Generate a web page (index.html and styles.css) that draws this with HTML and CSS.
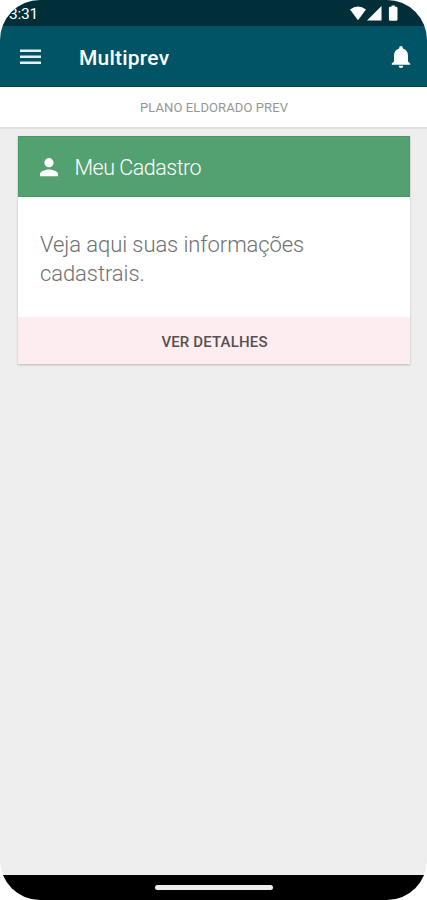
FILE: index.html
```html
<!DOCTYPE html>
<html lang="pt-BR">
<head>
<meta charset="utf-8">
<title>Multiprev</title>
<link rel="stylesheet" href="styles.css">
</head>
<body>
<div class="phone">
  <div class="status">
    <span class="clock">3:31</span>
    <svg class="status-icons" width="52" height="18" viewBox="0 0 52 18" fill="#fff">
      <path d="M1 4.500Q9-1.500 17 4.500L9 15.200Z"/>
      <path d="M32.500 1V15.500H18Z"/>
      <path d="M42.500 .5h3.400v1.300h1.200q1.400 0 1.400 1.400v11q0 1.500-1.500 1.500h-5.600q-1.500 0-1.500-1.500V3.200q0-1.400 1.400-1.400h1.200Z"/>
    </svg>
  </div>
  <header class="appbar">
    <svg class="menu" width="22" height="16" viewBox="0 0 22 16" fill="#e4f1f4"><path d="M0 .5h21v2.500H0zM0 6.500h21V9H0zM0 12.500h21V15H0z"/></svg>
    <h1 class="title">Multiprev</h1>
    <svg class="bell" width="20" height="24" viewBox="0 0 20 24" fill="#fff"><path d="M10 1c-1.100 0-1.800.8-1.800 1.900v.7C4.900 4.400 3 7.200 3 10.500v6L.8 18.600v1.100h18.400v-1.100L17 16.500v-6c0-3.300-1.900-6.100-5.200-6.900v-.7C11.800 1.800 11.100 1 10 1ZM7.700 20.700a2.300 2.300 0 0 0 4.600 0Z"/></svg>
  </header>
  <div class="plan"><span class="plan-name">PLANO ELDORADO PREV</span></div>
  <main class="content">
    <section class="card">
      <div class="card-head">
        <svg class="person" width="18" height="19" viewBox="0 0 18 19" fill="#fff"><circle cx="9" cy="4.700" r="4.600"/><path d="M0 18.300v-2.300c0-3 6-4.600 9-4.600s9 1.600 9 4.600v2.300Z"/></svg>
        <h2 class="card-title">Meu Cadastro</h2>
      </div>
      <p class="card-text">Veja aqui suas informações<br>cadastrais.</p>
      <div class="card-action"><span class="action-label">VER DETALHES</span></div>
    </section>
  </main>
  <div class="nav"><div class="home"></div></div>
</div>
</body>
</html>
```
FILE: styles.css
```css
body {
  margin: 0;
  background: #fff;
  font-family: Roboto, sans-serif;
}
.phone {
  box-sizing: border-box;
  width: 427px;
  height: 900px;
  display: flex;
  flex-direction: column;
  overflow: hidden;
  border-radius: 40px;
  background: #eee;
}
.status {
  height: 26px;
  flex: none;
  display: flex;
  justify-content: space-between;
  background: #002f39;
}
.clock {
  margin-left: 9px;
  color: #fff;
  font-size: 15.5px;
  line-height: 28px;
  letter-spacing: -0.2px;
}
.status-icons {
  margin: 5px 26px 0 0;
}
.appbar {
  height: 61px;
  box-sizing: border-box;
  flex: none;
  display: flex;
  align-items: center;
  padding: 0 16px 0 20px;
  background: #005465;
  border-bottom: 1px solid #004553;
}
.menu,
.bell {
  margin-top: 1px;
}
.title {
  margin: 4px 0 0 37px;
  flex: 1;
  color: #fff;
  font-size: 21px;
  line-height: 28px;
  font-weight: 500;
  letter-spacing: 0.22px;
}
.plan {
  height: 40px;
  flex: none;
  display: flex;
  align-items: center;
  justify-content: center;
  padding-left: 1px;
  background: #fff;
  border-bottom: 2px solid #e2e1e1;
  color: #969696;
  font-size: 13px;
  letter-spacing: 0.1px;
}
.content {
  flex: 1;
  padding: 7px 17px 0 18px;
}
.card {
  background: #fff;
  box-shadow: 0 1px 2px rgba(0, 0, 0, 0.24);
}
.card-head {
  height: 61px;
  box-sizing: border-box;
  display: flex;
  align-items: center;
  gap: 17px;
  padding-left: 20.5px;
  background: #53a071;
  border: 1px solid #459b68;
}
.person {
  margin-top: 1px;
}
.card-title {
  margin: 2px 0 0;
  color: #fff;
  font-size: 21.5px;
  line-height: 28px;
  font-weight: 300;
  letter-spacing: -0.5px;
}
.card-text {
  height: 120px;
  box-sizing: border-box;
  margin: 0;
  padding: 33px 22px 0;
  color: #707070;
  font-size: 22px;
  line-height: 29px;
  font-weight: 300;
  letter-spacing: -0.08px;
}
.card-action {
  height: 47px;
  display: flex;
  align-items: center;
  justify-content: center;
  padding: 2px 0 0 1px;
  box-sizing: border-box;
  background: #fdedf0;
  color: #565052;
  font-size: 15px;
  font-weight: 500;
  letter-spacing: 0.15px;
}
.nav {
  height: 25px;
  flex: none;
  display: flex;
  justify-content: center;
  background: #000;
}
.home {
  width: 118px;
  height: 5px;
  margin-top: 10px;
  border-radius: 3px;
  background: #eee;
}
```
